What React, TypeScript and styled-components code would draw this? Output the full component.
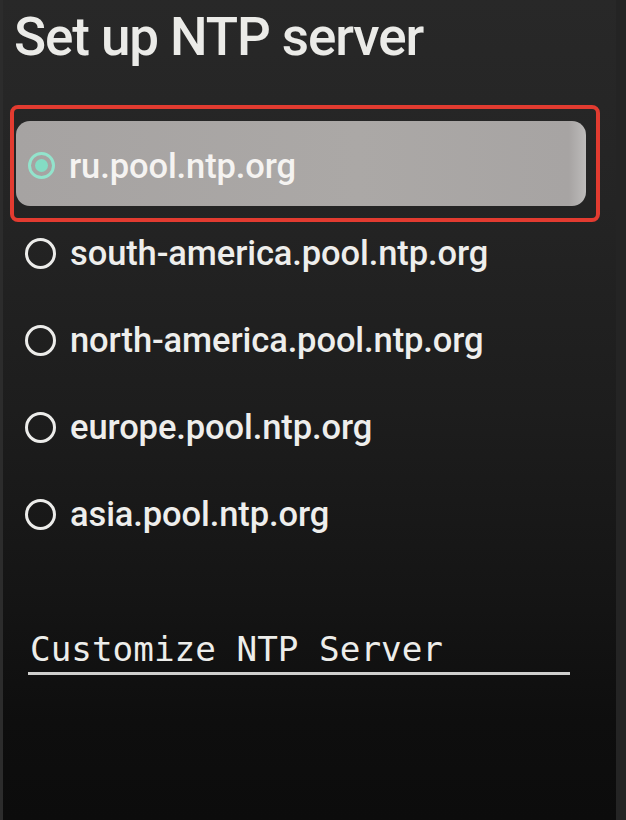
import React from "react";
import styled, { createGlobalStyle } from "styled-components";

const Global = createGlobalStyle`
  html, body { margin: 0; padding: 0; background: #121212; }
  #root { width: 626px; height: 820px; }
`;

const Screen = styled.div`
  position: relative;
  width: 626px;
  height: 820px;
  box-sizing: border-box;
  overflow: hidden;
  display: flex;
  flex-direction: column;
  font-family: Roboto, "Liberation Sans", sans-serif;
  background: linear-gradient(
    180deg,
    #282828 0%,
    #242424 25%,
    #1d1d1d 50%,
    #151515 72%,
    #0e0e0e 88%,
    #0c0c0c 100%
  );
  border-left: 3px solid #2c2c2c;
  border-right: 10px solid #242424;
`;

const Title = styled.h1`
  margin: 0;
  height: 105px;
  box-sizing: border-box;
  padding: 6px 0 0 11px;
  font-size: 53px;
  line-height: 62px;
  font-weight: 500;
  letter-spacing: -1.1px;
  color: #ebebe8;
`;

const List = styled.div`
  display: flex;
  flex-direction: column;
  gap: 27px;
`;

const HighlightFrame = styled.div`
  margin: 0 16px 0 7px;
  height: 117px;
  box-sizing: border-box;
  border: 4px solid #e23b30;
  border-radius: 8px;
  padding: 12px 10px 12px 2px;
  margin-bottom: -26px;
`;

const SelectedPill = styled.div`
  height: 85px;
  box-sizing: border-box;
  border-radius: 14px;
  background: linear-gradient(90deg, #a6a3a2 0%, #aba8a6 60%, #a7a4a3 97%, #bdbbba 100%);
  display: flex;
  align-items: center;
  gap: 14px;
  padding: 4px 0 0 12px;
`;

const Row = styled.div`
  height: 60px;
  display: flex;
  align-items: center;
  gap: 14px;
  padding-left: 22px;
`;

const Radio = styled.span<{ $checked?: boolean }>`
  flex: none;
  box-sizing: border-box;
  width: ${(p) => (p.$checked ? 27 : 31)}px;
  height: ${(p) => (p.$checked ? 27 : 31)}px;
  border-radius: 50%;
  border: ${(p) => (p.$checked ? "3px solid #93e3cc" : "3.5px solid #ececea")};
  display: flex;
  align-items: center;
  justify-content: center;
  &::after {
    content: "";
    display: ${(p) => (p.$checked ? "block" : "none")};
    width: 13px;
    height: 13px;
    border-radius: 50%;
    background: #84dcc4;
  }
`;

const Label = styled.span<{ $onLight?: boolean }>`
  font-size: 34.5px;
  line-height: 40px;
  font-weight: 500;
  color: ${(p) => (p.$onLight ? "#f5f3f1" : "#eeeeec")};
  white-space: nowrap;
  letter-spacing: -0.1px;
`;

const CustomField = styled.div`
  margin: 85px 0 0 25px;
  width: 542px;
  box-sizing: border-box;
  padding: 0 0 3px 2px;
  border-bottom: 3px solid #cfcfcd;
  font-family: "DejaVu Sans Mono", "Liberation Mono", monospace;
  font-size: 34.3px;
  line-height: 40px;
  color: #ededea;
  white-space: nowrap;
`;

const servers = [
  "south-america.pool.ntp.org",
  "north-america.pool.ntp.org",
  "europe.pool.ntp.org",
  "asia.pool.ntp.org",
];

export default function App() {
  return (
    <>
      <Global />
      <Screen>
        <Title>Set up NTP server</Title>
        <List>
          <HighlightFrame>
            <SelectedPill>
              <Radio $checked />
              <Label $onLight>ru.pool.ntp.org</Label>
            </SelectedPill>
          </HighlightFrame>
          {servers.map((s) => (
            <Row key={s}>
              <Radio />
              <Label>{s}</Label>
            </Row>
          ))}
        </List>
        <CustomField>Customize NTP Server</CustomField>
      </Screen>
    </>
  );
}
